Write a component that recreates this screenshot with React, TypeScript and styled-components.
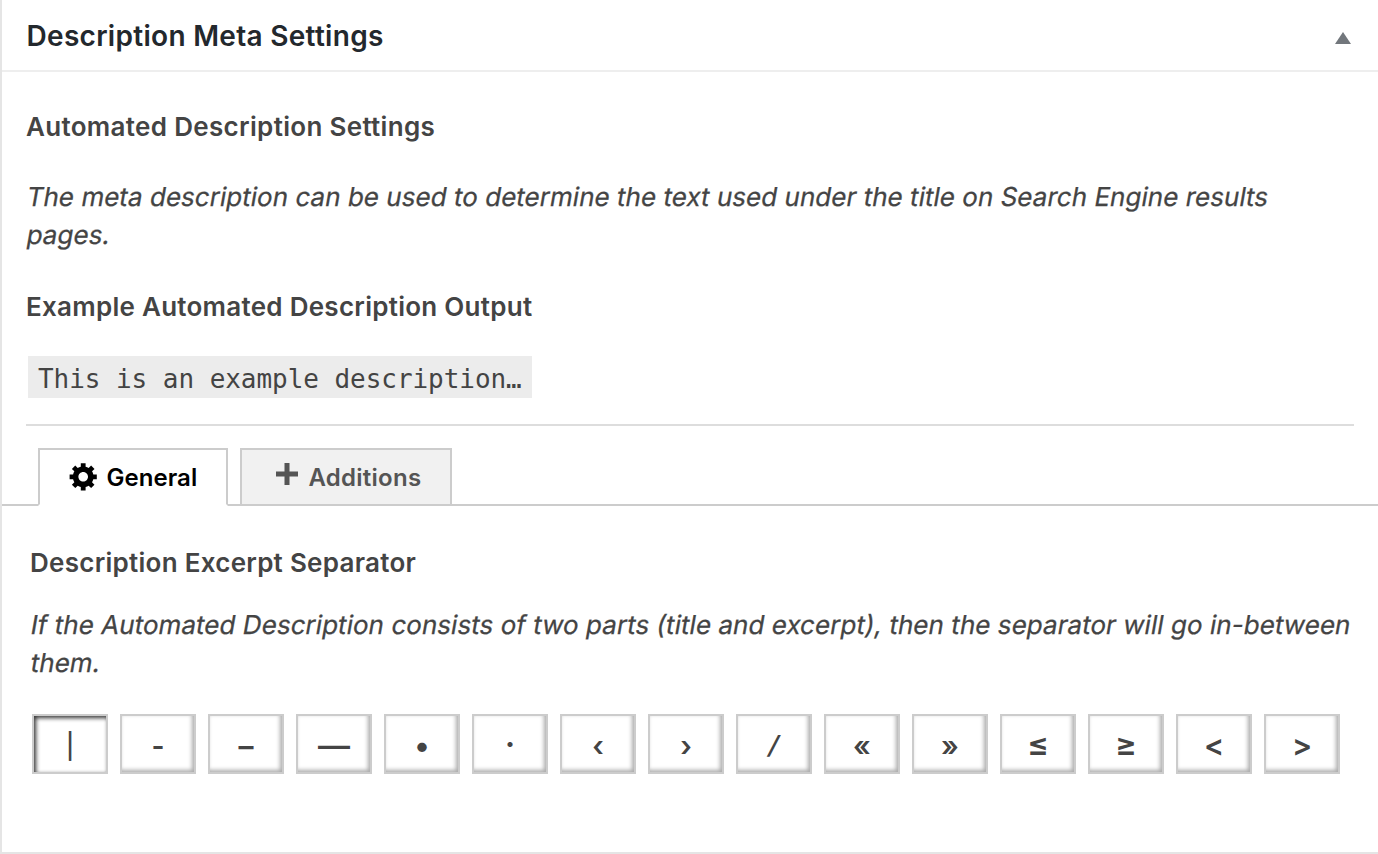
import React from 'react';
import styled, { createGlobalStyle } from 'styled-components';

const Global = createGlobalStyle`
  * { box-sizing: border-box; }
  body { margin: 0; background: #fff; font-family: Inter, "Liberation Sans", sans-serif; color: #444; }
`;

const Panel = styled.main`
  width: 1378px;
  height: 854px;
  border-left: 2px solid #e5e5e5;
  border-bottom: 2px solid #e5e5e5;
  background: #fff;
  overflow: hidden;
`;

const Header = styled.header`
  height: 72px;
  border-bottom: 2px solid #eee;
  display: flex;
  align-items: center;
  justify-content: space-between;
  padding: 2px 27px 0 24.5px;
`;

const Title = styled.h2`
  margin: 0;
  font-size: 28px;
  line-height: 36px;
  font-weight: 600;
  letter-spacing: 0.3px;
  color: #23282d;
`;

const Toggle = styled.svg`
  display: block;
  width: 16px;
  height: 12px;
  margin-top: 4px;
  fill: #72777c;
`;

const Intro = styled.section`
  margin: 0 24px;
  padding-top: 36px;
  height: 354px;
  border-bottom: 2px solid #ddd;
`;

const Heading = styled.h4<{ $track?: number }>`
  margin: 0;
  font-size: 26px;
  line-height: 38px;
  font-weight: 600;
  letter-spacing: ${p => p.$track ?? 0.27}px;
`;

const Note = styled.p<{ $top: number; $bottom: number; $track: number }>`
  margin: ${p => p.$top}px 0 ${p => p.$bottom}px;
  padding-left: 1px;
  font-size: 26px;
  line-height: 38px;
  -webkit-text-stroke: 0.25px #444;
  letter-spacing: ${p => p.$track}px;
  white-space: nowrap;
`;

const Line = styled.span`
  display: block;
  width: max-content;
  transform: skewX(-10deg);
`;

const Code = styled.code`
  display: block;
  width: 504px;
  height: 42px;
  margin: 30px 0 0 2px;
  padding: 0 10px;
  background: #ececec;
  font: 26px/46px "DejaVu Sans Mono", monospace;
  letter-spacing: -0.05px;
  white-space: nowrap;
`;

const TabBar = styled.nav`
  display: flex;
  gap: 12px;
  height: 58px;
  margin-top: 22px;
  padding-left: 36px;
  box-shadow: inset 0 -2px #ccc;
`;

const Tab = styled.div<{ $active?: boolean }>`
  display: flex;
  align-items: center;
  width: ${p => (p.$active ? 190 : 212)}px;
  height: ${p => (p.$active ? 58 : 56)}px;
  padding-left: ${p => (p.$active ? 28 : 33.5)}px;
  padding-top: 2px;
  border: 2px solid #ccc;
  border-bottom: ${p => (p.$active ? '2px solid #fff' : '0')};
  background: ${p => (p.$active ? '#fff' : '#f1f1f1')};
  color: ${p => (p.$active ? '#000' : '#555')};
  font-size: 24px;
  line-height: 32px;
  font-weight: 600;
  letter-spacing: ${p => (p.$active ? 0.05 : 0.25)}px;
`;

const Gear = styled.svg`
  width: 32px;
  height: 32px;
  margin: 0 6.5px 4px 0;
  flex: none;
  fill: currentColor;
`;

const Plus = styled.svg`
  width: 22px;
  height: 22px;
  margin: 0 11px 8px 0;
  flex: none;
  fill: currentColor;
`;

const Options = styled.section`
  padding: 38px 0 0 28px;
`;

const Separators = styled.div`
  display: flex;
  gap: 12px;
  padding-left: 2px;
`;

const Separator = styled.button<{ $selected: boolean }>`
  display: flex;
  align-items: center;
  justify-content: center;
  width: 76px;
  height: 60px;
  padding: 4px 0 0;
  border: 2px solid #ccc;
  background: #fff;
  box-shadow: ${p => (p.$selected ? 'inset 2px 2px 4px #333' : 'inset -2px -2px 4px #aaa')};
  color: #444;
`;

const Glyph = styled.span<{ $size: number; $weight: number; $slant: number; $lift: number }>`
  font-family: Inter, "Liberation Sans", sans-serif;
  font-size: ${p => p.$size}px;
  font-weight: ${p => p.$weight};
  line-height: 36px;
  padding-bottom: ${p => p.$lift * 2}px;
  transform: ${p => (p.$slant ? `skewX(${-p.$slant}deg)` : 'none')};
`;

type Sign = { mark: string; size?: number; weight?: number; slant?: number; lift?: number };

const separators: Sign[] = [
  { mark: '|', size: 25 },
  { mark: '-', size: 28, weight: 600 },
  { mark: '–', size: 30, weight: 600 },
  { mark: '—', size: 32, weight: 600 },
  { mark: '•', size: 30, lift: 1 },
  { mark: '·', size: 30, weight: 700, lift: 2 },
  { mark: '‹', size: 28, weight: 600 },
  { mark: '›', size: 28, weight: 600 },
  { mark: '/', size: 25, weight: 600, slant: 14, lift: 1 },
  { mark: '«', size: 28, weight: 600 },
  { mark: '»', size: 28, weight: 600 },
  { mark: '≤', size: 32, weight: 600, lift: 1 },
  { mark: '≥', size: 32, weight: 600, lift: 1 },
  { mark: '<', size: 30, weight: 600, lift: 1 },
  { mark: '>', size: 30, weight: 600, lift: 1 },
];

export default function App() {
  return (
    <Panel>
      <Global />
      <Header>
        <Title>Description Meta Settings</Title>
        <Toggle viewBox="0 0 16 12"><path d="M8 0 16 12H0z" /></Toggle>
      </Header>
      <Intro>
        <Heading $track={0.32}>Automated Description Settings</Heading>
        <Note $top={32} $bottom={34} $track={0.025}>
          <Line>The meta description can be used to determine the text used under the title on Search Engine results</Line>
          <Line>pages.</Line>
        </Note>
        <Heading>Example Automated Description Output</Heading>
        <Code>This is an example description…</Code>
      </Intro>
      <TabBar>
        <Tab $active>
          <Gear viewBox="0 0 20 20">
            <path d="M18 12h-2.18c-.17.7-.44 1.35-.81 1.93l1.54 1.54-2.1 2.1-1.54-1.54c-.58.36-1.23.63-1.91.79V19H8v-2.18c-.68-.16-1.33-.43-1.91-.79l-1.54 1.54-2.12-2.12 1.54-1.54c-.36-.58-.63-1.23-.79-1.91H1V9.03h2.17c.16-.7.44-1.35.8-1.94L2.43 5.55l2.1-2.1 1.54 1.54c.58-.37 1.24-.64 1.93-.81V2h3v2.18c.68.16 1.33.43 1.91.79l1.54-1.54 2.12 2.12-1.54 1.54c.36.59.64 1.24.8 1.94H18V12zm-8.5 1.5c1.66 0 3-1.34 3-3s-1.34-3-3-3-3 1.34-3 3 1.34 3 3 3z" />
          </Gear>
          General
        </Tab>
        <Tab>
          <Plus viewBox="0 0 22 22"><path d="M8.5 0h5v8.5H22v5h-8.5V22h-5v-8.5H0v-5h8.5z" /></Plus>
          Additions
        </Tab>
      </TabBar>
      <Options>
        <Heading>Description Excerpt Separator</Heading>
        <Note $top={24} $bottom={32} $track={0.045}>
          <Line>If the Automated Description consists of two parts (title and excerpt), then the separator will go in-between</Line>
          <Line>them.</Line>
        </Note>
        <Separators>
          {separators.map(({ mark, size = 26, weight = 500, slant = 0, lift = 0 }, i) => (
            <Separator key={mark} $selected={i === 0}>
              <Glyph $size={size} $weight={weight} $slant={slant} $lift={lift}>{mark}</Glyph>
            </Separator>
          ))}
        </Separators>
      </Options>
    </Panel>
  );
}
